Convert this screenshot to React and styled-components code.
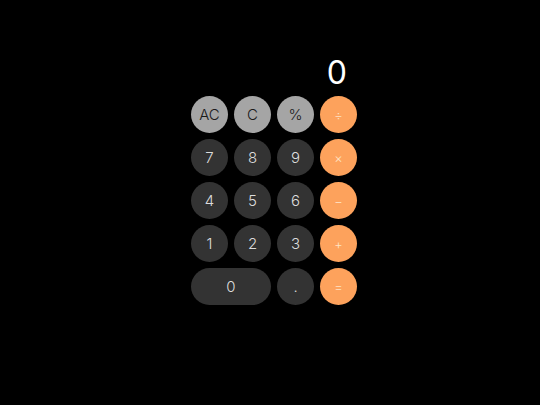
import React, { useState } from "react";
import styled, { createGlobalStyle } from "styled-components";

const GlobalStyle = createGlobalStyle`
  html, body {
    margin: 0;
    background: #000;
    font-family: Inter, "Liberation Sans", sans-serif;
  }
`;

const keys = [
  { label: "AC", kind: "fn" },
  { label: "C", kind: "fn" },
  { label: "%", kind: "fn" },
  { label: "÷", kind: "op" },
  { label: "7" }, { label: "8" }, { label: "9" },
  { label: "×", kind: "op" },
  { label: "4" }, { label: "5" }, { label: "6" },
  { label: "−", kind: "op" },
  { label: "1" }, { label: "2" }, { label: "3" },
  { label: "+", kind: "op" },
  { label: "0", wide: true },
  { label: "." },
  { label: "=", kind: "op" },
];

const App = () => {
  const [value] = useState("0");

  return (
    <>
      <GlobalStyle />
      <Page>
        <Calculator>
          <Display>{value}</Display>
          <Keypad>
            {keys.map(({ label, kind, wide }) => (
              <Key key={label} kind={kind} wide={wide}>{label}</Key>
            ))}
          </Keypad>
        </Calculator>
      </Page>
    </>
  );
};

export default App;

const Page = styled.div`
  display: flex;
  justify-content: center;
  width: 540px;
  height: 405px;
  padding: 50px 0 0 8px;
  box-sizing: border-box;
`;

const Calculator = styled.div`
  display: flex;
  flex-direction: column;
  width: 166px;
`;

const Display = styled.div`
  height: 40px;
  margin-bottom: 6px;
  padding-right: 10px;
  color: #fff;
  font-size: 32px;
  font-weight: 400;
  line-height: 46px;
  text-align: right;
`;

const Keypad = styled.div`
  display: grid;
  grid-template-columns: repeat(4, 37px);
  grid-auto-rows: 37px;
  gap: 6px;
`;

const Key = styled.button`
  grid-column: ${({ wide }) => wide ? "span 2" : "auto"};
  display: flex;
  align-items: center;
  justify-content: center;
  padding: 0;
  border: none;
  border-radius: 19px;
  background: ${({ kind }) => kind === "fn" ? "#a5a5a5" : kind === "op" ? "#fda25c" : "#333333"};
  color: ${({ kind }) => kind === "fn" ? "#1a1a1a" : kind === "op" ? "#ffe2c4" : "#dcdcdc"};
  font-family: Inter, "Liberation Sans", sans-serif;
  font-size: ${({ kind }) => kind === "op" ? "13px" : "15px"};
  font-weight: 300;
  cursor: pointer;
`;
